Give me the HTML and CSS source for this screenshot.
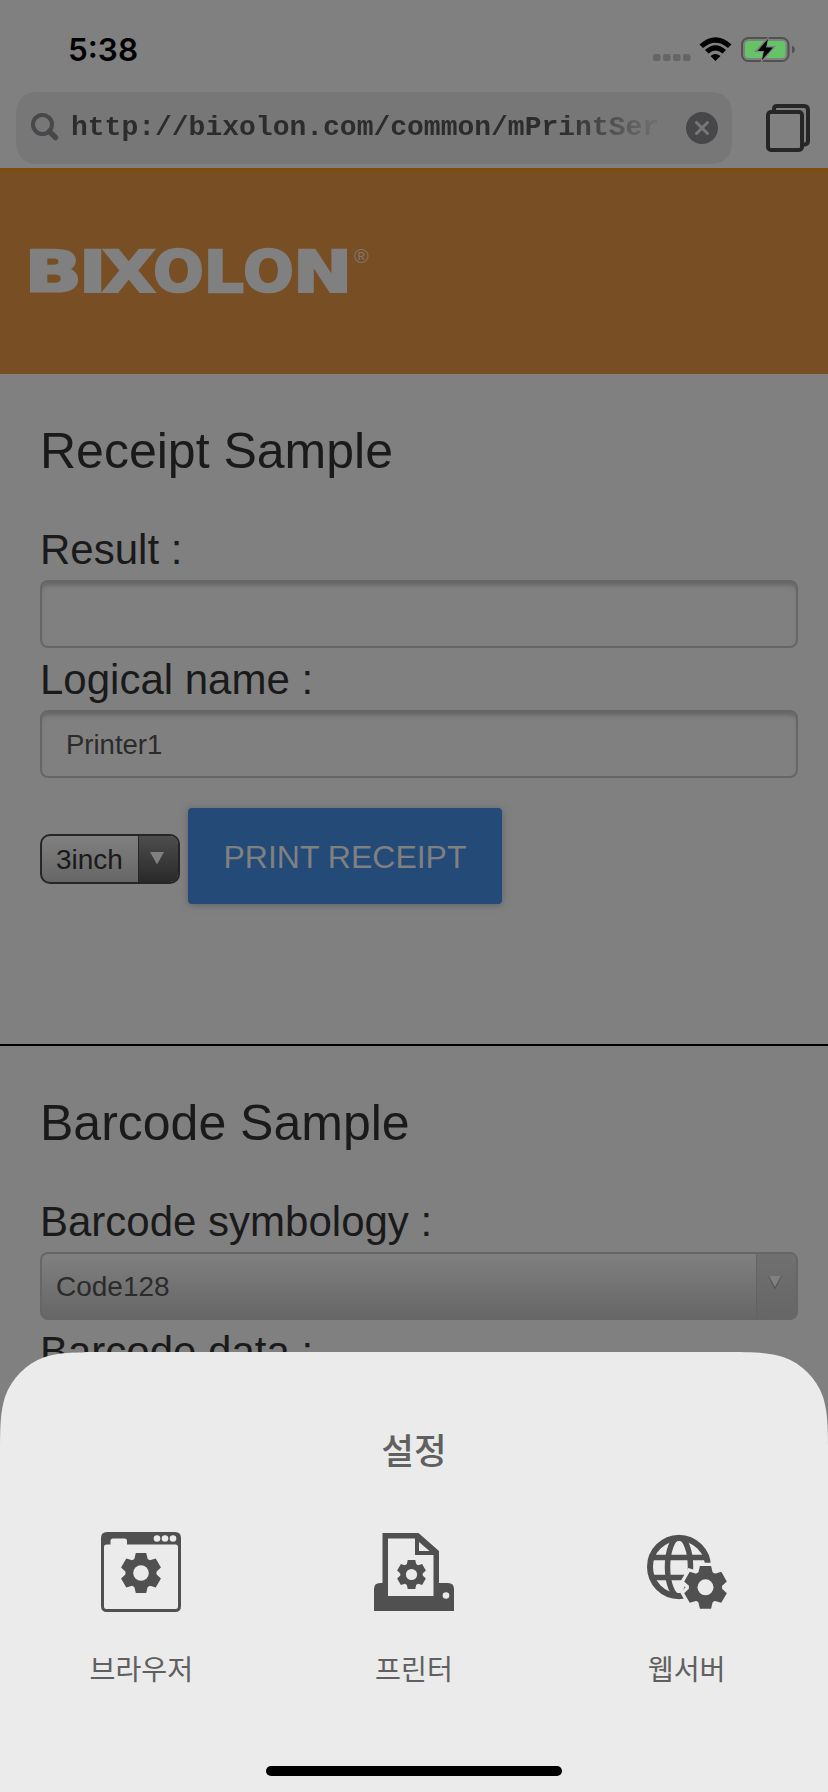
FILE: index.html
```html
<!DOCTYPE html>
<html lang="ko">
<head>
<meta charset="utf-8">
<title>mPrintServer</title>
<link rel="stylesheet" href="styles.css">
</head>
<body>
<svg width="0" height="0" class="defs">
  <defs>
    <g id="gear">
      <circle r="15.5"/>
      <g id="tooth"><path d="M-7-12.500L-5.200-20H5.200L7-12.500Z"/></g>
      <use href="#tooth" transform="rotate(60)"/>
      <use href="#tooth" transform="rotate(120)"/>
      <use href="#tooth" transform="rotate(180)"/>
      <use href="#tooth" transform="rotate(240)"/>
      <use href="#tooth" transform="rotate(300)"/>
    </g>
  </defs>
</svg>
<div class="screen">
  <div class="status">
    <span class="time">5:38</span>
    <svg class="indicators" width="144" height="28" viewBox="0 0 144 28">
      <g fill="#656565"><rect x="2" y="18" width="7.5" height="7" rx="2"/><rect x="12" y="18" width="7.5" height="7" rx="2"/><rect x="22" y="18" width="7.5" height="7" rx="2"/><rect x="32" y="18" width="7.5" height="7" rx="2"/></g>
      <path d="M48.500 8.500Q64.500-6 80.500 8.500L77 12Q64.500 1.500 52 12ZM54 14Q64.500 4.500 75 14L71.500 17.500Q64.500 11.500 57.500 17.500ZM59.500 20Q64.500 16 69.500 20L64.500 25Z"/>
      <rect x="91" y="2" width="46.500" height="23" rx="6.500" fill="none" stroke="#515151" stroke-width="2"/>
      <rect x="94" y="5" width="40.500" height="17" rx="3.500" fill="#65c466"/>
      <path d="M141 9.500Q144 11 144 13.500T141 17.500Z" fill="#515151"/>
      <path d="M118 0L103 16H112L109 28L125 10H116Z" fill="#808080"/>
      <path d="M117 3L106.500 15H113L111 24L122 11.500H115Z"/>
    </svg>
  </div>
  <div class="toolbar">
    <div class="address">
      <svg class="search" width="28" height="28" viewBox="0 0 28 28"><circle cx="11.500" cy="11.500" r="9.500"/><path d="M18.500 18.500L24.500 24.500" stroke-width="5.500"/></svg>
      <span class="url">http://bixolon.com/common/mPrintSer</span>
      <svg width="32" height="32" viewBox="0 0 32 32"><circle cx="16" cy="16" r="16" fill="#47474a"/><path d="M10.500 10.500L21.500 21.500M21.500 10.500L10.500 21.500" stroke="#777" stroke-width="3" stroke-linecap="round"/></svg>
    </div>
    <svg class="tabs" width="44" height="48" viewBox="0 0 44 48"><path d="M8 7V5Q8 2 11 2H38Q42 2 42 6V37Q42 40 39 40.500H37"/><rect x="2" y="8" width="34" height="38" rx="3"/></svg>
  </div>
  <header class="brand">
    <svg width="345" height="60" viewBox="0 0 345 60" overflow="visible">
      <text class="logo" y="50.500"><tspan x="-5.200" textLength="57" lengthAdjust="spacingAndGlyphs">B</tspan><tspan x="48.900" textLength="27.500" lengthAdjust="spacingAndGlyphs">I</tspan><tspan x="72.500" textLength="52.700" lengthAdjust="spacingAndGlyphs">X</tspan><tspan x="123.300" textLength="50.400" lengthAdjust="spacingAndGlyphs">O</tspan><tspan x="173.800" textLength="40" lengthAdjust="spacingAndGlyphs">L</tspan><tspan x="213.300" textLength="50.400" lengthAdjust="spacingAndGlyphs">O</tspan><tspan x="263.200" textLength="58.700" lengthAdjust="spacingAndGlyphs">N</tspan></text>
      <text class="reg" x="324" y="22">®</text>
    </svg>
  </header>
  <section class="sample receipt">
    <h1>Receipt Sample</h1>
    <div class="label">Result :</div>
    <div class="input"></div>
    <div class="label">Logical name :</div>
    <div class="input">Printer1</div>
    <div class="actions">
      <div class="select small"><span class="value">3inch</span><span class="arrow"><svg width="14" height="13" viewBox="0 0 14 13"><path d="M0 0H14L7 12.500Z"/></svg></span></div>
      <div class="button">PRINT RECEIPT</div>
    </div>
  </section>
  <section class="sample">
    <h1>Barcode Sample</h1>
    <div class="label">Barcode symbology :</div>
    <div class="select wide"><span class="value">Code128</span><span class="arrow"><svg width="14" height="14" viewBox="0 0 14 14"><path d="M0 0L7 13.500L14 0Z" fill="#555"/><path d="M1 0H13L7 11Z"/></svg></span></div>
    <div class="label">Barcode data :</div>
  </section>
  <div class="sheet">
    <div class="title">설정</div>
    <div class="menu">
      <div class="item">
        <svg width="80" height="80" viewBox="0 0 80 80">
          <path fill-rule="evenodd" d="M6 0H74Q80 0 80 6V74Q80 80 74 80H6Q0 80 0 74V6Q0 0 6 0ZM5.500 12.500Q3 12.500 3 15V74.500Q3 77 5.500 77H74.500Q77 77 77 74.500V15Q77 12.500 74.500 12.500H26V9Q26 6.500 23.500 6.500H12Q9.500 6.500 9.500 9V12.500Z"/>
          <g fill="#ebebeb"><circle cx="56" cy="6.500" r="3.300"/><circle cx="64" cy="6.500" r="3.300"/><circle cx="72" cy="6.500" r="3.300"/></g>
          <use href="#gear" x="40" y="41"/><circle cx="40" cy="41" r="7.800" fill="#ebebeb"/>
        </svg>
        <span>브라우저</span>
      </div>
      <div class="item">
        <svg width="80" height="80" viewBox="0 0 80 80">
          <path fill-rule="evenodd" d="M8.500 1H44.500L65 19V51H74Q80 51 80 57V79H0V57Q0 51 6 51H8.500ZM14 6.500V64H59.500V23H41V6.500ZM45 10V19H55.500Z"/>
          <circle cx="72" cy="63.500" r="3.300" fill="#ebebeb"/>
          <use href="#gear" transform="translate(37.500 42.500) scale(.72)"/><circle cx="37.500" cy="42.500" r="5.600" fill="#ebebeb"/>
        </svg>
        <span>프린터</span>
      </div>
      <div class="item">
        <svg width="80" height="80" viewBox="0 0 80 80">
          <g fill="none" stroke="#505050" stroke-width="6"><circle cx="32" cy="35" r="29"/><ellipse cx="32" cy="35" rx="11.500" ry="29.500" stroke-width="5.500"/><path d="M4 25.500H60M4 45.500H42" stroke-width="5.500"/></g>
          <use href="#gear" transform="translate(58.500 55.300) scale(1.070)" stroke="#ebebeb" stroke-width="6"/>
          <use href="#gear" transform="translate(58.500 55.300) scale(1.070)"/><circle cx="58.500" cy="55.300" r="8" fill="#ebebeb"/>
        </svg>
        <span>웹서버</span>
      </div>
    </div>
    <div class="home"></div>
  </div>
</div>
</body>
</html>
```
FILE: styles.css
```css
* { box-sizing: border-box; }
body { margin: 0; }
.defs { position: absolute; }
.screen {
  position: relative;
  width: 828px;
  height: 1792px;
  overflow: hidden;
  background: #808080;
  color: #1a1a1a;
  font-family: "Liberation Sans", Arial, sans-serif;
}
.status {
  height: 92px;
  padding: 30px 33px 0 68px;
  display: flex;
  justify-content: space-between;
}
.time { font: 600 31.500px/40px Inter, sans-serif; color: #000; }
.indicators { margin: 6px 0 0; }
.toolbar { height: 76px; padding: 0 18px 4px 16px; display: flex; justify-content: space-between; }
.address {
  width: 716px;
  height: 72px;
  border-radius: 20px;
  background: #777;
  padding: 0 14px 0 15px;
  display: flex;
  align-items: center;
}
.search { fill: none; stroke: #48484a; stroke-width: 4; stroke-linecap: round; margin-right: 12px; margin-top: -3px; }
.url {
  width: 590px;
  margin-right: 25px;
  white-space: nowrap;
  font: bold 28px/36px "Liberation Mono", monospace;
  color: #2c2c2c;
  mask-image: linear-gradient(90deg, #000 83%, transparent 101%);
}
.tabs { margin-top: 12px; fill: none; stroke: #262626; stroke-width: 4; }
.brand {
  height: 206px;
  padding: 73px 0 0 30px;
  background: linear-gradient(#7c4d14 5px, #784e24 6px);
}
.brand svg { display: block; }
.logo { font: bold 57px "DejaVu Sans", sans-serif; fill: #808080; stroke: #808080; stroke-width: 2.5px; }
.reg { font: 20px "Liberation Sans", sans-serif; fill: #807567; }
.sample { padding: 47px 30px 0 40px; }
.receipt { height: 672px; border-bottom: 2px solid #000; }
h1 { margin: 0 0 37px; font-size: 50px; line-height: 60px; font-weight: 400; }
.label { font-size: 42px; line-height: 60px; padding-top: 2px; }
.input {
  height: 68px;
  border: 2px solid #666;
  border-radius: 8px;
  box-shadow: inset 0 5px 4px -2px #646464;
  padding-left: 24px;
  font-size: 27.500px;
  line-height: 66px;
  color: #2b2b2b;
}
.actions { display: flex; padding-top: 30px; }
.select { display: flex; overflow: hidden; border: 2px solid #666; border-radius: 8px; font-size: 28px; }
.value { flex: 1; padding-left: 14px; }
.arrow { width: 40px; display: flex; justify-content: center; border-left: 1px solid #626262; fill: #808080; }
.small { width: 140px; height: 50px; margin: 26px 8px 0 0; border-color: #262626; border-radius: 10px; background: linear-gradient(#808080, #666); line-height: 47px; }
.small .arrow { background: linear-gradient(#4d4d4d, #292929); border-color: #262626; padding: 16px 3px 0 0; }
.wide { height: 68px; background: linear-gradient(#808080, #666); line-height: 66px; color: #2b2b2b; }
.wide .arrow { background: linear-gradient(#707070, #666); padding: 22px 3px 0 0; }
.button {
  width: 314px;
  height: 96px;
  border-radius: 4px;
  background: #244a77;
  box-shadow: 0 1px 7px #4448;
  color: #808080;
  font-size: 32px;
  line-height: 98px;
  text-align: center;
}
.sheet {
  position: absolute;
  left: 0;
  top: 1352px;
  width: 828px;
  height: 440px;
  padding: 72px 5px 16px;
  display: flex;
  flex-direction: column;
  background: #ebebeb;
  color: #606060;
  font-family: "Noto Sans CJK KR", sans-serif;
  clip-path: path("M0 107C0 76.200 0 60.800 5.240 44.200C11.830 26.100 26.100 11.830 44.200 5.240C60.800 0 76.200 0 107 0H721C751.800 0 767.200 0 783.800 5.240C801.900 11.830 816.170 26.100 822.760 44.200C828 60.800 828 76.200 828 107V440H0Z");
}
.title { font-size: 35.500px; line-height: 50px; font-weight: 500; text-align: center; }
.menu { display: grid; grid-template-columns: repeat(3, 1fr); margin-top: 58px; }
.item { display: flex; flex-direction: column; align-items: center; font-size: 28.200px; line-height: 40px; gap: 36px; }
.item svg { fill: #505050; }
.home { width: 296px; height: 10px; margin: auto auto 0; border-radius: 5px; background: #000; }
```
